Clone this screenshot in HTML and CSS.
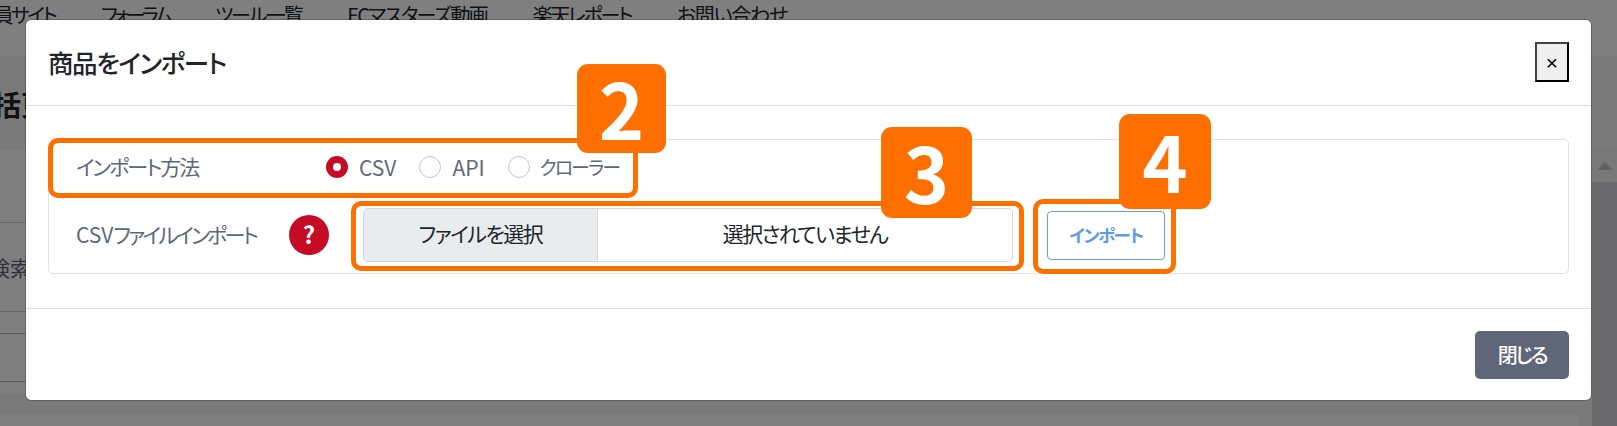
FILE: index.html
```html
<!DOCTYPE html>
<html lang="ja">
<head>
<meta charset="utf-8">
<title>商品をインポート</title>
<link rel="stylesheet" href="styles.css">
</head>
<body>
<div class="page">
  <nav class="nav">
    <a class="nav-first">会員サイト</a>
    <a class="nav-forum">フォーラム</a>
    <a class="nav-tools">ツール一覧</a>
    <a class="nav-video">ECマスターズ動画</a>
    <a class="nav-report">楽天レポート</a>
    <a class="nav-contact">お問い合わせ</a>
  </nav>
  <h1 class="page-title">一括更新</h1>
  <div class="panel">
    <div class="panel-main">
      <div class="panel-row panel-row-tall"></div>
      <div class="panel-row panel-row-search"><span class="search-label">検索</span></div>
      <div class="panel-row panel-row-short"></div>
      <div class="panel-row panel-row-mid"></div>
      <div class="panel-row panel-row-end"></div>
      <div class="panel-gap"></div>
      <div class="panel-next"></div>
    </div>
    <div class="scrollbar"><div class="scroll-up"><span class="scroll-arrow"></span></div></div>
  </div>
</div>
<div class="backdrop"></div>
<section class="modal">
  <header class="modal-header">
    <h2 class="modal-title">商品をインポート</h2>
    <button class="close-btn" type="button">×</button>
  </header>
  <div class="modal-body">
    <div class="card">
      <div class="row row-method">
        <span class="label label-method">インポート方法</span>
        <div class="radios">
          <label class="radio"><input type="radio" name="m" checked><span>CSV</span></label>
          <label class="radio"><input type="radio" name="m"><span>API</span></label>
          <label class="radio"><input type="radio" name="m"><span class="radio-kana">クローラー</span></label>
        </div>
      </div>
      <div class="row row-file">
        <span class="label label-file">CSV<span class="label-kana">ファイルインポート</span></span>
        <span class="help">?</span>
        <div class="file-input">
          <span class="file-btn">ファイルを選択</span>
          <span class="file-name">選択されていません</span>
        </div>
        <button class="import-btn" type="button">インポート</button>
      </div>
    </div>
  </div>
  <footer class="modal-footer">
    <button class="dismiss-btn" type="button">閉じる</button>
  </footer>
  <div class="hl hl-2"></div>
  <div class="hl hl-3"></div>
  <div class="hl hl-4"></div>
  <div class="badge badge-2">2</div>
  <div class="badge badge-3">3</div>
  <div class="badge badge-4">4</div>
</section>
</body>
</html>
```
FILE: styles.css
```css
* { box-sizing: border-box; }
html, body { margin: 0; height: 426px; overflow: hidden; }
body {
  font-family: "Noto Sans CJK JP", "Noto Sans", sans-serif;
  font-size: 21px;
  font-feature-settings: "palt";
  color: #212529;
  background: #fff;
  position: relative;
}
.page { height: 426px; display: flex; flex-direction: column; background: #f5f5f5; overflow: hidden; }
.nav {
  height: 56px;
  flex: none;
  background: #fff;
  display: flex;
  gap: 45.5px;
  padding-top: 1px;
  font-size: 20px;
  line-height: 28px;
  color: #212529;
  white-space: nowrap;
}
.nav-first { margin-left: -24px; letter-spacing: -2.5px; }
.nav-forum { letter-spacing: -3.8px; }
.nav-tools { letter-spacing: -2px; }
.nav-video { letter-spacing: -1.7px; }
.nav-report { letter-spacing: -2.2px; }
.nav-contact { letter-spacing: -1.2px; }
.page-title {
  flex: none;
  height: 93px;
  margin: 0 0 0 -35px;
  padding-top: 28px;
  font-size: 28px;
  line-height: 40px;
  font-weight: 700;
  color: #212529;
  white-space: nowrap;
}
.panel { flex: 1; display: flex; min-height: 0; }
.panel-main { flex: 1; display: flex; flex-direction: column; background: #fff; }
.panel-row { border-bottom: 1px solid #cfcfcf; flex: none; }
.panel-row-tall { height: 74px; }
.panel-row-search { height: 89px; padding-top: 29px; line-height: 30px; color: #5f6779; white-space: nowrap; }
.search-label { margin-left: -11px; }
.panel-row-short { height: 22px; border-bottom-color: #bdbdbd; }
.panel-row-mid { height: 48px; border-bottom-color: #bdbdbd; }
.panel-row-end { height: 11px; border-bottom: 0; }
.panel-gap { height: 22px; flex: none; background: #f5f5f5; }
.panel-next { flex: 1; background: #fff; margin-right: 13px; border-radius: 5px 5px 0 0; box-shadow: 13px 0 0 #f5f5f5; }
.scrollbar { width: 25px; flex: none; background: #d2d3d7; }
.scroll-up { height: 33px; background: #f1f1f1; display: flex; align-items: center; justify-content: center; }
.scroll-arrow { width: 0; height: 0; border: 8px solid transparent; border-top: 0; border-bottom: 8px solid #c4c4c4; }
.backdrop { position: absolute; inset: 0; background: rgba(0, 0, 0, 0.5); }

.modal {
  position: absolute;
  left: 26px;
  top: 20px;
  width: 1565px;
  height: 380px;
  background: #fff;
  border-radius: 5px;
  box-shadow: 0 0 0 1px rgba(0, 0, 0, 0.2);
  display: flex;
  flex-direction: column;
}
.modal-header {
  height: 86px;
  flex: none;
  padding: 22px 22px 0 22px;
  border-bottom: 1px solid #dee2e6;
  display: flex;
  justify-content: space-between;
  align-items: flex-start;
}
.modal-title { margin: 0; font-size: 25.5px; line-height: 40px; font-weight: 500; letter-spacing: -1.4px; color: #212529; }
.close-btn {
  width: 34px;
  height: 40px;
  padding: 0;
  background: #efefef;
  border: 2px solid;
  border-color: #444 #000 #000 #444;
  font: 400 21px/1 "Liberation Sans", sans-serif;
  color: #000;
}
.modal-body { height: 202px; flex: none; padding: 33px 22px 0; }
.card {
  height: 135px;
  border: 1px solid #e2e2e2;
  border-radius: 5px;
  padding: 0 0 11px 27px;
  display: flex;
  flex-direction: column;
  gap: 14px;
}
.row { display: flex; align-items: center; }
.row-method { height: 54px; }
.row-file { height: 54px; }
.label { width: 250px; flex: none; color: #5f6779; line-height: 30px; padding-bottom: 2px; white-space: nowrap; }
.label-method { letter-spacing: -2px; }
.label-file { width: 213px; }
.label-kana { letter-spacing: -2.7px; }
.radios { display: flex; }
.radio { display: flex; align-items: center; color: #5f6779; line-height: 30px; }
.radio-kana { font-size: 19px; letter-spacing: -2px; margin-left: -1px; }
.radio input {
  appearance: none;
  width: 22px;
  height: 22px;
  margin: 0 11px 0 0;
  border: 1px solid #c4c6ca;
  border-radius: 50%;
  background: #fff;
}
.radio input:checked { border: 7px solid #c50b26; }
.radio + .radio { margin-left: 23px; }
.help {
  width: 40px;
  height: 40px;
  flex: none;
  border-radius: 50%;
  background: #c50b26;
  color: #fff;
  font-weight: 700;
  font-size: 24px;
  line-height: 38px;
  text-align: center;
}
.file-input {
  margin-left: 34px;
  width: 650px;
  height: 54px;
  flex: none;
  display: flex;
  border: 1px solid #d3d7dc;
  border-radius: 4px;
  line-height: 48px;
  text-align: center;
  overflow: hidden;
}
.file-btn { width: 234px; flex: none; background: #e9ecef; border-right: 1px solid #d3d7dc; letter-spacing: -1.5px; }
.file-name { flex: 1; letter-spacing: -1.6px; }
.import-btn {
  margin-left: 34px;
  width: 118px;
  height: 49px;
  flex: none;
  background: #fff;
  border: 1px solid #6d9ddb;
  border-radius: 4px;
  color: #5c9be6;
  font-family: "Noto Sans CJK JP", sans-serif;
  font-weight: 700;
  font-size: 17.5px;
  line-height: 1;
  letter-spacing: -1.4px;
  font-feature-settings: "palt";
  padding: 0;
}
.modal-footer {
  flex: 1;
  border-top: 1px solid #dee2e6;
  display: flex;
  justify-content: flex-end;
  padding: 22px 22px 0 0;
  align-items: flex-start;
}
.dismiss-btn {
  width: 94px;
  height: 48px;
  background: #5f6678;
  border: 0;
  border-radius: 5px;
  color: #fff;
  font-family: "Noto Sans CJK JP", sans-serif;
  font-weight: 500;
  font-size: 20px;
  line-height: 1;
  letter-spacing: -2.3px;
  font-feature-settings: "palt";
  padding: 0;
}

.hl { position: absolute; border: 5px solid #ff6f00; border-radius: 10px; }
.hl-2 { left: 22px; top: 118px; width: 590px; height: 60px; }
.hl-3 { left: 325px; top: 181px; width: 673px; height: 70px; }
.hl-4 { left: 1007px; top: 179px; width: 143px; height: 75px; }
.badge {
  position: absolute;
  background: #ff6f00;
  border-radius: 11px;
  color: #fff;
  font-weight: 700;
  font-size: 77px;
  line-height: 1;
  padding-bottom: 5px;
  display: flex;
  align-items: center;
  justify-content: center;
}
.badge-2 { left: 551px; top: 44px; width: 89px; height: 89px; }
.badge-3 { left: 855px; top: 107px; width: 91px; height: 91px; }
.badge-4 { left: 1093px; top: 94px; width: 92px; height: 95px; }
```
